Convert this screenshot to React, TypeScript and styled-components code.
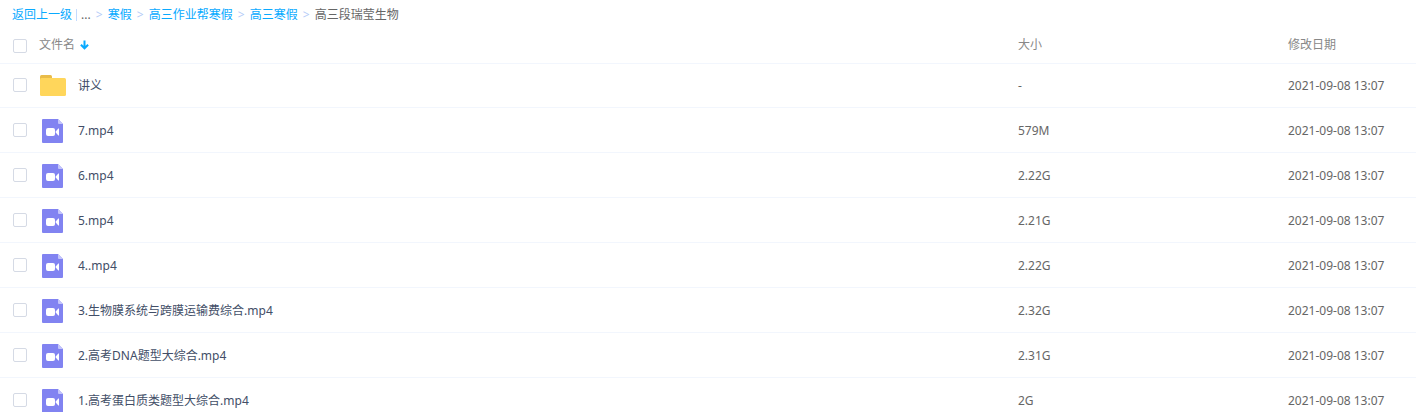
import React, { Fragment, useState } from 'react';
import styled, { createGlobalStyle } from 'styled-components';

const GlobalStyle = createGlobalStyle`
  * { box-sizing: border-box; }
  html { scrollbar-width: none; }
  body {
    margin: 0;
    background: #fff;
    color: #666;
    font: 12px/16px "Noto Sans", "Noto Sans CJK SC", sans-serif;
  }
`;

const Breadcrumb = styled.nav`
  display: flex;
  align-items: center;
  height: 28px;
  padding: 2px 12px 0;
  white-space: nowrap;
`;

const CrumbLink = styled.a`
  color: #09aaff;
  text-decoration: none;
  &:hover { text-decoration: underline; }
`;

const Bar = styled.span`
  width: 1px;
  height: 12px;
  margin: 0 4px;
  background: #c4dbfe;
`;

const Separator = styled.span`
  width: 17px;
  text-align: center;
  color: #b4cdf8;
`;

const Current = styled.span`
  color: #666;
`;

const FileTable = styled.table`
  width: 100%;
  table-layout: fixed;
  border-collapse: separate;
  border-spacing: 0;
`;

const HeadCell = styled.th<{ $width?: number }>`
  width: ${(p) => (p.$width ? `${p.$width}px` : 'auto')};
  height: 36px;
  padding: 0;
  border-bottom: 1px solid #f2f6fd;
  color: #888;
  font-weight: 400;
  text-align: left;
  vertical-align: middle;
`;

const HeadLabel = styled.div`
  padding-bottom: 2px;
`;

const Row = styled.tr`
  &:hover { background: #f4fbff; }
`;

const Cell = styled.td<{ $short?: boolean }>`
  height: ${(p) => (p.$short ? 44 : 45)}px;
  padding: ${(p) => (p.$short ? 0 : 2)}px 0 0;
  border-bottom: 1px solid #f2f6fd;
  vertical-align: middle;
`;

const CheckCell = styled(Cell)`
  padding: 0 0 1px;
`;

const Checkbox = styled.input`
  display: block;
  appearance: none;
  width: 14px;
  height: 14px;
  margin: 0 0 0 13px;
  border: 1px solid #d5dae5;
  border-radius: 2px;
  background: #fff;
  &:checked { background: #09aaff; border-color: #09aaff; }
`;

const SortButton = styled.button`
  display: flex;
  align-items: center;
  gap: 5px;
  padding: 0;
  border: 0;
  background: none;
  color: inherit;
  font: inherit;
  cursor: pointer;
`;

const FileName = styled.div`
  display: flex;
  align-items: center;
  gap: 12px;
`;

const FileLink = styled.a`
  color: #424e67;
  text-decoration: none;
  &:hover { color: #09aaff; }
`;

const Icon = styled.svg`
  display: block;
  flex: none;
`;

const ArrowDown = () => (
  <Icon width="9" height="10" viewBox="0 0 9 10" aria-hidden="true">
    <path d="M4.500 0.500v8M0.900 4.700l3.600 3.600 3.600-3.600" fill="none" stroke="#09aaff" strokeWidth="2" />
  </Icon>
);

const FolderIcon = () => (
  <Icon width="27" height="26" viewBox="0 0 27 26" aria-hidden="true">
    <path d="M1 8V3.500Q1 2 2.500 2h9Q13 2 13 3.500V8z" fill="#e9bc49" />
    <rect x="1" y="5" width="26" height="18" rx="1.500" fill="#ffd65b" />
  </Icon>
);

const VideoIcon = () => (
  <Icon width="27" height="26" viewBox="0 0 27 26" aria-hidden="true">
    <path d="M4 1H19l5 5v18q0 1-1 1H4Q3 25 3 24V2Q3 1 4 1z" fill="#8183f1" />
    <path d="M19 1l5 5h-4Q19 6 19 5z" fill="#c4c5fa" />
    <rect x="7" y="10" width="9" height="8" rx="2" fill="#fff" />
    <path d="M16.300 14l3-3.500h.7v7h-.7z" fill="#fff" />
  </Icon>
);

const parents = ['寒假', '高三作业帮寒假', '高三寒假'];

const files = [
  { name: '讲义', size: '-', folder: true },
  { name: '7.mp4', size: '579M' },
  { name: '6.mp4', size: '2.22G' },
  { name: '5.mp4', size: '2.21G' },
  { name: '4..mp4', size: '2.22G' },
  { name: '3.生物膜系统与跨膜运输费综合.mp4', size: '2.32G' },
  { name: '2.高考DNA题型大综合.mp4', size: '2.31G' },
  { name: '1.高考蛋白质类题型大综合.mp4', size: '2G' },
];

export default function App() {
  const [selected, setSelected] = useState<string[]>([]);
  const allSelected = selected.length === files.length;
  const toggle = (name: string) =>
    setSelected((s) => (s.includes(name) ? s.filter((n) => n !== name) : [...s, name]));

  return (
    <main>
      <GlobalStyle />
      <Breadcrumb>
        <CrumbLink href="#back">返回上一级</CrumbLink>
        <Bar />
        <span>...</span>
        <Separator>&gt;</Separator>
        {parents.map((p) => (
          <Fragment key={p}>
            <CrumbLink href={`#${p}`}>{p}</CrumbLink>
            <Separator>&gt;</Separator>
          </Fragment>
        ))}
        <Current>高三段瑞莹生物</Current>
      </Breadcrumb>
      <FileTable>
        <thead>
          <tr>
            <HeadCell $width={39}>
              <Checkbox
                type="checkbox"
                aria-label="全选"
                checked={allSelected}
                onChange={() => setSelected(allSelected ? [] : files.map((f) => f.name))}
              />
            </HeadCell>
            <HeadCell>
              <HeadLabel>
                <SortButton type="button">
                  文件名
                  <ArrowDown />
                </SortButton>
              </HeadLabel>
            </HeadCell>
            <HeadCell $width={270}><HeadLabel>大小</HeadLabel></HeadCell>
            <HeadCell $width={128}><HeadLabel>修改日期</HeadLabel></HeadCell>
          </tr>
        </thead>
        <tbody>
          {files.map((f) => (
            <Row key={f.name}>
              <CheckCell $short={f.folder}>
                <Checkbox
                  type="checkbox"
                  aria-label={f.name}
                  checked={selected.includes(f.name)}
                  onChange={() => toggle(f.name)}
                />
              </CheckCell>
              <Cell $short={f.folder}>
                <FileName>
                  {f.folder ? <FolderIcon /> : <VideoIcon />}
                  <FileLink href={`#${f.name}`}>{f.name}</FileLink>
                </FileName>
              </Cell>
              <Cell $short={f.folder}>{f.size}</Cell>
              <Cell $short={f.folder}>2021-09-08 13:07</Cell>
            </Row>
          ))}
        </tbody>
      </FileTable>
    </main>
  );
}
